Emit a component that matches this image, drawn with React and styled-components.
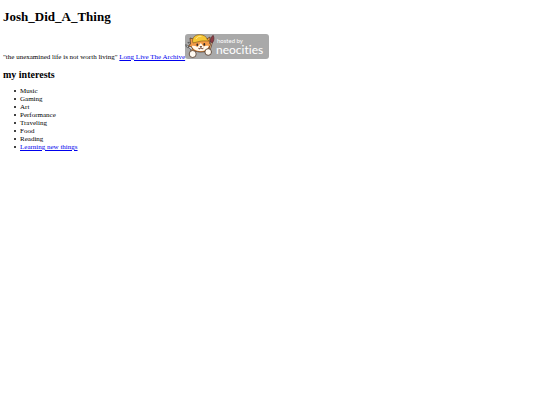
import React from "react";
import styled, { createGlobalStyle } from "styled-components";

const interests = [
  { name: "Music" },
  { name: "Gaming" },
  { name: "Art" },
  { name: "Performance" },
  { name: "Traveling" },
  { name: "Food" },
  { name: "Reading" },
  { name: "Learning new things", href: "#learning" },
];

//the "hosted by neocities" button with the cat
function NeocitiesBadge() {
  return (
    <Badge viewBox="0 0 84 25" role="img" aria-label="hosted by neocities">
      <rect width="84" height="25" rx="3" fill="#a9a9a9" />
      {/* wrench */}
      <path d="M1 10.5l2 2 1.6-.4.2-1.8-1.9-1.9c2.4-.4 4.1 1.2 3.4 3.600l2.200 3-1.800 1.500-2.700-2.900c-2 .5-3.500-1-3-3.100z" fill="#d9dde0" stroke="#444" strokeWidth=".8" />
      {/* body */}
      <path d="M9 13.5l-3 3 2 2 4-2 1 1 8 .3 1-1 4-3-3-2z" fill="#f5a04c" stroke="#4b3325" strokeWidth=".6" />
      {/* head and ears */}
      <path d="M5 4L5.500 10l-2 2 3 .8c1 3.400 4.500 5.200 9.300 5.200 4.600 0 7.400-2 8.200-5l2.600-1.500-2-2 .4-6.500-5 3-8 .1z" fill="#f39b48" stroke="#4b3325" strokeWidth=".7" />
      <path d="M6.800 12c2-.4 4 .2 5.700 1l3.300-4 2.700 3.500c2-.8 3.500-.9 5.200-.5-1 3.500-4 5-7.700 5-4.800 0-8-1.500-9.200-5z" fill="#fff8ec" />
      {/* hard hat */}
      <path d="M7.500 7c.2-4 2.800-6.300 7.200-6.300 4 0 7 1.900 7.800 5.200l2 1.300c-4-.5-7.500-.4-10.500.3L8 9z" fill="#f6c635" stroke="#795319" strokeWidth=".6" />
      <path d="M11 5c1.500-2.600 3.500-3 5.500-2.700" fill="none" stroke="#fff0a0" strokeWidth=".8" />
      <ellipse cx="12.300" cy="10.700" rx=".9" ry="1.300" fill="#352b28" />
      <ellipse cx="19.300" cy="10.400" rx=".9" ry="1.300" fill="#352b28" />
      <path d="M15 12.500h1.800l-.9.900zM13.300 14.200c1 1.200 2 .8 2.500-.6.700 1.400 1.700 1.600 2.700.4" fill="#96362f" stroke="#4b3325" strokeWidth=".6" />
      {/* brush */}
      <path d="M26.800 8l-3 11" stroke="#59382f" strokeWidth="2" />
      <path d="M26.800 8l-3 11" stroke="#e3c28d" strokeWidth=".8" />
      <path d="M25.500 8c-.5-2.800.5-5 2.700-6.700 1.200 2.600.9 5.200-.7 7.400z" fill="#8f3b43" stroke="#572d32" strokeWidth=".7" />
      {/* paws */}
      <circle cx="7.700" cy="20" r="3.500" fill="#fffaf2" stroke="#4b3325" strokeWidth=".8" />
      <circle cx="23.200" cy="18" r="3.300" fill="#fffaf2" stroke="#4b3325" strokeWidth=".8" />
      <text x="32" y="9" fontSize="6">hosted by</text>
      <text x="31" y="20" fontSize="12">neocities</text>
    </Badge>
  );
}

export default function App() {
  return (
    <>
      <GlobalStyle />
      <Page>
        <Title>Josh_Did_A_Thing</Title>
        <Intro>
          "the unexamined life is not worth living"{" "}
          <Link href="#archive">Long Live The Archive</Link>
          <Link href="#neocities">
            <NeocitiesBadge />
          </Link>
        </Intro>
        <Heading>my interests</Heading>
        <List>
          {interests.map((item) => (
            <Item key={item.name}>
              {item.href ? <Link href={item.href}>{item.name}</Link> : item.name}
            </Item>
          ))}
        </List>
      </Page>
    </>
  );
}

const GlobalStyle = createGlobalStyle`
  body {
    margin: 0;
    background: #fff;
    color: #000;
    font: 7px/8px "Liberation Serif", "Times New Roman", serif;
  }
`;

const Page = styled.main`
  padding: 9px 3px;
`;

const Title = styled.h1`
  margin: 0 0 9px;
  font-size: 13px;
  line-height: 16px;
`;

const Intro = styled.p`
  margin: 0 0 8px;
`;

const Heading = styled.h2`
  margin: 0 0 6px;
  font-size: 10px;
  line-height: 12px;
`;

const List = styled.ul`
  margin: 0;
  padding-left: 11px;
  list-style: none;
`;

const Item = styled.li`
  display: flex;
  align-items: center;
  gap: 4px;
  &::before {
    content: "";
    width: 2px;
    height: 2px;
    border-radius: 50%;
    background: #000;
  }
`;

const Link = styled.a`
  color: #0000ee;
  text-decoration: underline;
`;

const Badge = styled.svg`
  width: 84px;
  height: 25px;
  vertical-align: baseline;
  text {
    fill: #fff;
    font-family: Lato, "Open Sans", sans-serif;
    font-variant-ligatures: none;
  }
`;
